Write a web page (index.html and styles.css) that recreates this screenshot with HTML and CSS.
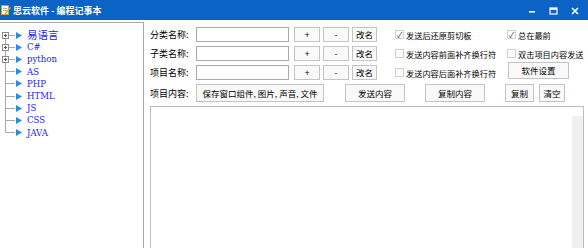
FILE: index.html
```html
<!DOCTYPE html>
<html lang="zh-CN">
<head>
    <meta charset="UTF-8">
    <title>思云软件 - 编程记事本</title>
    <link rel="stylesheet" href="styles.css">
</head>
<body>
    <div class="window">
        <div class="titlebar">
            <svg class="app-icon" width="10" height="12" viewBox="0 0 10 12">
                <rect x="0.5" y="1.5" width="7" height="9" fill="#fffbe8" stroke="#c9a24a"/>
                <line x1="2" y1="4.5" x2="6" y2="4.5" stroke="#b0b0b0"/>
                <line x1="2" y1="6.5" x2="6" y2="6.5" stroke="#b0b0b0"/>
                <polygon points="4,9 9,3 10,4 5,10 3.5,10.5" fill="#f0a020"/>
            </svg>
            <span class="title">思云软件 - 编程记事本</span>
            <div class="win-btns">
                <svg width="8" height="8" viewBox="0 0 8 8"><rect x="1" y="4" width="6" height="1.6" fill="#fff"/></svg>
                <svg width="9" height="8" viewBox="0 0 9 8"><rect x="1" y="1" width="7" height="6" fill="none" stroke="#fff" stroke-width="1.2"/><rect x="1" y="1" width="7" height="1.8" fill="#fff"/></svg>
                <svg width="8" height="8" viewBox="0 0 8 8"><path d="M1 1 L7 7 M7 1 L1 7" stroke="#fff" stroke-width="1.6"/></svg>
            </div>
        </div>

        <div class="main">
            <div class="tree">
                <div class="node first">
                    <svg class="branch" width="26" height="13" viewBox="0 0 26 13">
                        <path d="M5.5 6.5 V13 M5.5 6.5 H15" stroke="#a8a8a8"/>
                        <rect x="2.5" y="3.5" width="6" height="6" fill="#fff" stroke="#8c8c8c"/>
                        <path d="M4 6.5 H7 M5.5 5 V8" stroke="#555"/>
                        <polygon points="16,3 22,6.5 16,10" fill="#1d8fe6"/>
                    </svg>
                    <span class="cn">易语言</span>
                </div>
                <div class="node">
                    <svg class="branch" width="26" height="13" viewBox="0 0 26 13">
                        <path d="M5.5 0 V13 M5.5 6.5 H15" stroke="#a8a8a8"/>
                        <rect x="2.5" y="3.5" width="6" height="6" fill="#fff" stroke="#8c8c8c"/>
                        <path d="M4 6.5 H7 M5.5 5 V8" stroke="#555"/>
                        <polygon points="16,3 22,6.5 16,10" fill="#1d8fe6"/>
                    </svg>
                    <span class="en">C#</span>
                </div>
                <div class="node">
                    <svg class="branch" width="26" height="13" viewBox="0 0 26 13">
                        <path d="M5.5 0 V13 M5.5 6.5 H15" stroke="#a8a8a8"/>
                        <rect x="2.5" y="3.5" width="6" height="6" fill="#fff" stroke="#8c8c8c"/>
                        <path d="M4 6.5 H7 M5.5 5 V8" stroke="#555"/>
                        <polygon points="16,3 22,6.5 16,10" fill="#1d8fe6"/>
                    </svg>
                    <span class="en">python</span>
                </div>
                <div class="node">
                    <svg class="branch" width="26" height="13" viewBox="0 0 26 13">
                        <path d="M5.5 0 V13 M5.5 6.5 H15" stroke="#a8a8a8"/>
                        <polygon points="16,3 22,6.5 16,10" fill="#1d8fe6"/>
                    </svg>
                    <span class="en">AS</span>
                </div>
                <div class="node">
                    <svg class="branch" width="26" height="13" viewBox="0 0 26 13">
                        <path d="M5.5 0 V13 M5.5 6.5 H15" stroke="#a8a8a8"/>
                        <polygon points="16,3 22,6.5 16,10" fill="#1d8fe6"/>
                    </svg>
                    <span class="en">PHP</span>
                </div>
                <div class="node">
                    <svg class="branch" width="26" height="13" viewBox="0 0 26 13">
                        <path d="M5.5 0 V13 M5.5 6.5 H15" stroke="#a8a8a8"/>
                        <polygon points="16,3 22,6.5 16,10" fill="#1d8fe6"/>
                    </svg>
                    <span class="en">HTML</span>
                </div>
                <div class="node">
                    <svg class="branch" width="26" height="13" viewBox="0 0 26 13">
                        <path d="M5.5 0 V13 M5.5 6.5 H15" stroke="#a8a8a8"/>
                        <polygon points="16,3 22,6.5 16,10" fill="#1d8fe6"/>
                    </svg>
                    <span class="en">JS</span>
                </div>
                <div class="node">
                    <svg class="branch" width="26" height="13" viewBox="0 0 26 13">
                        <path d="M5.5 0 V13 M5.5 6.5 H15" stroke="#a8a8a8"/>
                        <polygon points="16,3 22,6.5 16,10" fill="#1d8fe6"/>
                    </svg>
                    <span class="en">CSS</span>
                </div>
                <div class="node">
                    <svg class="branch" width="26" height="13" viewBox="0 0 26 13">
                        <path d="M5.5 0 V6.5 H15" stroke="#a8a8a8" fill="none"/>
                        <polygon points="16,3 22,6.5 16,10" fill="#1d8fe6"/>
                    </svg>
                    <span class="en">JAVA</span>
                </div>
            </div>

            <div class="form">
                <div class="row">
                    <span class="lbl">分类名称:</span>
                    <input type="text" class="field">
                    <button class="btn pm">+</button>
                    <button class="btn pm">-</button>
                    <button class="btn rename">改名</button>
                    <label class="chk col-a"><span class="box">✓</span>发送后还原剪切板</label>
                    <label class="chk"><span class="box">✓</span>总在最前</label>
                </div>
                <div class="row">
                    <span class="lbl">子类名称:</span>
                    <input type="text" class="field">
                    <button class="btn pm">+</button>
                    <button class="btn pm">-</button>
                    <button class="btn rename">改名</button>
                    <label class="chk col-a"><span class="box"></span>发送内容前面补齐换行符</label>
                    <label class="chk"><span class="box"></span>双击项目内容发送</label>
                </div>
                <div class="row">
                    <span class="lbl">项目名称:</span>
                    <input type="text" class="field">
                    <button class="btn pm">+</button>
                    <button class="btn pm">-</button>
                    <button class="btn rename">改名</button>
                    <label class="chk col-a"><span class="box"></span>发送内容后面补齐换行符</label>
                    <button class="btn settings">软件设置</button>
                </div>
                <div class="row actions">
                    <span class="lbl">项目内容:</span>
                    <button class="btn save">保存窗口组件, 图片, 声音, 文件</button>
                    <button class="btn send">发送内容</button>
                    <button class="btn copy-all">复制内容</button>
                    <button class="btn copy">复制</button>
                    <button class="btn clear">清空</button>
                </div>
                <div class="editor">
                    <div class="vscroll"></div>
                </div>
            </div>
        </div>
    </div>
</body>
</html>
```

FILE: styles.css
```css
html, body {
    margin: 0;
    padding: 0;
    background: #ffffff;
    overflow: hidden;
}

.window {
    width: 588px;
    height: 248px;
    font-family: "Noto Sans CJK SC", "Liberation Sans", sans-serif;
    color: #000000;
    overflow: hidden;
}

.titlebar {
    height: 20px;
    background: #0b63c5;
    display: flex;
    align-items: center;
    color: #ffffff;
}

.app-icon {
    margin-left: 1px;
    margin-right: 2px;
}

.title {
    font-size: 9px;
    font-weight: bold;
}

.win-btns {
    margin-left: auto;
    display: flex;
    align-items: center;
    gap: 13px;
    margin-right: 9px;
    margin-top: 2px;
}

.main {
    display: flex;
    height: 228px;
}

.tree {
    width: 143px;
    flex-shrink: 0;
    margin-top: 2px;
    border-top: 1px solid #a8a8a8;
    border-right: 1px solid #a8a8a8;
    padding-top: 6px;
}

.node {
    display: flex;
    align-items: center;
    height: 12.2px;
    white-space: nowrap;
}

.branch {
    display: block;
    flex-shrink: 0;
    margin-right: 1px;
    overflow: visible;
}

.cn {
    font-size: 10.5px;
    color: #1a1aff;
    line-height: 12px;
}

.en {
    font-family: "DejaVu Serif", "Liberation Serif", serif;
    font-stretch: condensed;
    font-size: 9.5px;
    color: #1a1aff;
    line-height: 12px;
}

.form {
    flex: 1;
    min-width: 0;
    padding: 7px 4px 0 6px;
}

.row {
    display: flex;
    align-items: center;
    height: 15px;
    margin-bottom: 4px;
    font-size: 8.2px;
    white-space: nowrap;
}

.lbl {
    width: 46px;
    flex-shrink: 0;
    font-size: 9px;
}

.field {
    box-sizing: border-box;
    width: 93px;
    height: 15px;
    margin: 0 5px 0 0;
    padding: 0 2px;
    border: 1px solid #a9a9a9;
    background: #ffffff;
    outline: none;
    flex-shrink: 0;
}

.btn {
    box-sizing: border-box;
    height: 15px;
    padding: 0;
    margin: 0;
    border: 1px solid #c4c4c4;
    background: #f9f9f9;
    font-family: inherit;
    font-size: 8.5px;
    color: #000000;
    line-height: 1;
    flex-shrink: 0;
}

.pm {
    width: 26px;
    margin-right: 3px;
}

.rename {
    width: 25px;
}

.chk {
    display: flex;
    align-items: center;
    width: 112px;
    flex-shrink: 0;
}

.col-a {
    margin-left: 18px;
}

.box {
    box-sizing: border-box;
    width: 9px;
    height: 9px;
    margin-right: 2px;
    border: 1px solid #cfcfcf;
    font-size: 8px;
    line-height: 7px;
    text-align: center;
    color: #333333;
    flex-shrink: 0;
}

.settings {
    width: 61px;
    height: 17px;
    margin-left: 1px;
    align-self: flex-start;
    margin-top: -3px;
}

.actions {
    height: 18px;
    margin-top: 1px;
    margin-bottom: 4px;
}

.actions .btn {
    height: 18px;
}

.save {
    width: 128px;
}

.send {
    width: 60px;
    margin-left: 21px;
}

.copy-all {
    width: 60px;
    margin-left: 20px;
}

.copy {
    width: 29px;
    margin-left: 20px;
}

.clear {
    width: 26px;
    margin-left: 5px;
}

.editor {
    height: 145px;
    border: 1px solid #bdbdbd;
    display: flex;
    justify-content: flex-end;
}

.vscroll {
    width: 11px;
    margin-top: 9px;
    background: #f0f0f0;
}
```
